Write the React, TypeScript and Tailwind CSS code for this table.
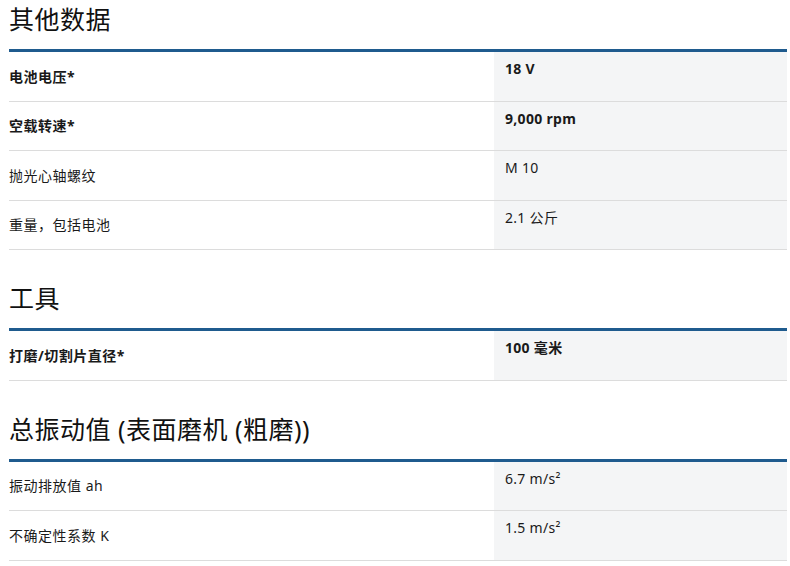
type Row = { label: string; value: string; bold?: boolean };

type Section = { title: string; rows: Row[] };

const SECTIONS: Section[] = [
  {
    title: "其他数据",
    rows: [
      { label: "电池电压*", value: "18 V", bold: true },
      { label: "空载转速*", value: "9,000 rpm", bold: true },
      { label: "抛光心轴螺纹", value: "M 10" },
      { label: "重量，包括电池", value: "2.1 公斤" },
    ],
  },
  {
    title: "工具",
    rows: [{ label: "打磨/切割片直径*", value: "100 毫米", bold: true }],
  },
  {
    title: "总振动值 (表面磨机 (粗磨))",
    rows: [
      { label: "振动排放值 ah", value: "6.7 m/s²" },
      { label: "不确定性系数 K", value: "1.5 m/s²" },
    ],
  },
];

const CJK = "font-['Noto_Sans','Noto_Sans_CJK_SC',sans-serif]";

function SpecRow({ row }: { row: Row }) {
  return (
    <div className="grid h-[49.5px] grid-cols-[485px_1fr] border-b border-[#dcdcdc]">
      <div
        className={`flex items-center text-[14px] tracking-[0.5px] text-[#1a1a1a] ${
          row.bold ? "font-bold" : ""
        }`}
      >
        {row.label}
      </div>
      <div
        className={`bg-[#f4f5f6] pl-[11px] pt-[7px] text-[14px] leading-[20px] tracking-[0.3px] text-[#1a1a1a] ${
          row.bold ? "font-bold" : ""
        }`}
      >
        {row.value}
      </div>
    </div>
  );
}

export default function App() {
  return (
    <div className={`min-h-[566px] bg-white pl-[9px] pt-[3px] ${CJK}`}>
      <div className="w-[778px]">
        {SECTIONS.map((s, i) => (
          <div key={s.title} className={i > 0 ? "mt-[32px]" : ""}>
            <h2 className="mb-[13px] text-[25px] leading-[33px] tracking-[0.5px] text-[#111]">
              {s.title}
            </h2>
            <div className="h-[3px] bg-[#1f5b8e]" />
            {s.rows.map((r) => (
              <SpecRow key={r.label} row={r} />
            ))}
          </div>
        ))}
      </div>
    </div>
  );
}
